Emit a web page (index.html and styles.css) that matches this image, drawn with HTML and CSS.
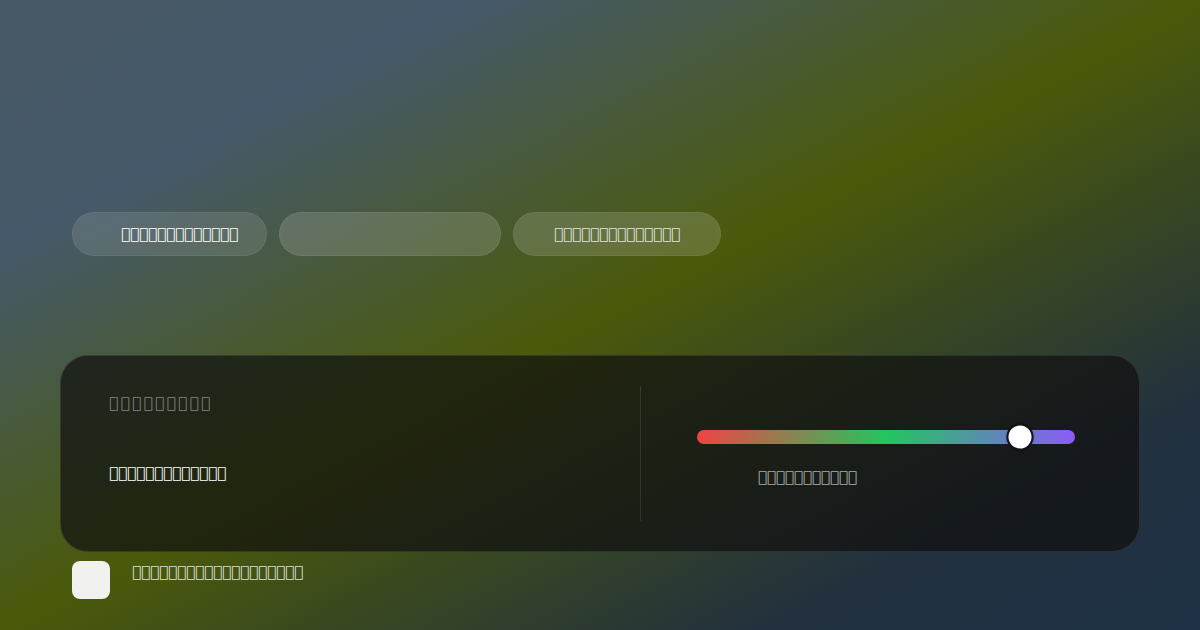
FILE: index.html
```html
<!DOCTYPE html>
<html>

  <head>
    <meta charset="utf-8">
    <link rel="stylesheet" href="styles.css">
  </head>

  <body>
    <div class="page">
      <div class="tabs">
        <button class="pill pill-active">&#xE101;&#xE102;&#xE103;&#xE104;&#xE105;&#xE106;&#xE107;&#xE108;&#xE109;&#xE10A;&#xE10B;&#xE10C;&#xE10D;</button>
        <button class="pill pill-empty"></button>
        <button class="pill pill-soft">&#xE111;&#xE112;&#xE113;&#xE114;&#xE115;&#xE116;&#xE117;&#xE118;&#xE119;&#xE11A;&#xE11B;&#xE11C;&#xE11D;&#xE11E;</button>
      </div>

      <div class="card">
        <div class="card-info">
          <div class="card-label">&#xE121;&#xE122;&#xE123;&#xE124;&#xE125;&#xE126;&#xE127;&#xE128;&#xE129;</div>
          <div class="card-value">&#xE131;&#xE132;&#xE133;&#xE134;&#xE135;&#xE136;&#xE137;&#xE138;&#xE139;&#xE13A;&#xE13B;&#xE13C;&#xE13D;</div>
        </div>

        <div class="card-divider"></div>

        <div class="card-control">
          <div class="hue-track">
            <div class="hue-thumb" style="left: 85.5%"></div>
          </div>
          <div class="hue-caption">&#xE141;&#xE142;&#xE143;&#xE144;&#xE145;&#xE146;&#xE147;&#xE148;&#xE149;&#xE14A;&#xE14B;</div>
        </div>
      </div>

      <label class="remember">
        <span class="checkbox"></span>
        <span class="remember-text">&#xE151;&#xE152;&#xE153;&#xE154;&#xE155;&#xE156;&#xE157;&#xE158;&#xE159;&#xE15A;&#xE15B;&#xE15C;&#xE15D;&#xE15E;&#xE15F;&#xE160;&#xE161;&#xE162;&#xE163;</span>
      </label>
    </div>
  </body>

</html>
```

FILE: styles.css
```css
html,
body {
  margin: 0;
  height: 100%;
}

body {
  font-family: "DejaVu Sans", sans-serif;
  font-size: 15px;
  line-height: 20px;
  color: #fff;
  background: linear-gradient(to bottom right, #485a66 0%, #46596a 20%, #4a5a0a 50%, #22303f 82%, #1e3146 100%);
  overflow: hidden;
}

.page {
  padding: 212px 60px 0;
}

/* tab pills */
.tabs {
  display: flex;
  gap: 12px;
  margin-left: 12px;
}

.pill {
  height: 44px;
  border: 1px solid rgba(255, 255, 255, 0.06);
  border-radius: 22px;
  font: inherit;
  color: #fff;
  background: rgba(255, 255, 255, 0.11);
  padding: 0 28px 0 48px;
}

.pill-empty {
  width: 222px;
  background: rgba(255, 255, 255, 0.15);
}

.pill-soft {
  padding: 0 40px;
  color: rgba(255, 255, 255, 0.85);
  background: rgba(255, 255, 255, 0.15);
}

/* main card */
.card {
  margin-top: 99px;
  display: grid;
  grid-template-columns: 6fr 1px 5fr;
  gap: 48px;
  padding: 30px 48px;
  height: 135px;
  border: 1px solid rgba(255, 255, 255, 0.1);
  border-radius: 28px;
  background: rgba(15, 15, 15, 0.7);
}

.card-info {
  padding-top: 7px;
}

.card-label {
  letter-spacing: 2.5px;
  color: rgba(255, 255, 255, 0.45);
}

.card-value {
  margin-top: 50px;
  font-weight: bold;
}

.card-divider {
  background: rgba(255, 255, 255, 0.1);
}

.card-control {
  padding: 38px 16px 0 8px;
}

.hue-track {
  position: relative;
  height: 14px;
  margin: 6px 0;
  border-radius: 7px;
  background: linear-gradient(90deg, #ef4444, #22c55e, #8b5cf6);
}

.hue-thumb {
  position: absolute;
  top: 50%;
  width: 23px;
  height: 23px;
  border: 2px solid #111318;
  border-radius: 50%;
  background: #fff;
  box-shadow: 0 0 2px rgba(0, 0, 0, 0.5);
  transform: translate(-50%, -50%);
}

.hue-caption {
  margin-top: 23px;
  padding-left: 61px;
  color: rgba(255, 255, 255, 0.65);
}

/* remember checkbox */
.remember {
  display: flex;
  align-items: flex-start;
  gap: 22px;
  margin: 9px 0 0 12px;
}

.checkbox {
  width: 38px;
  height: 38px;
  border-radius: 8px;
  background: #f1f2ef;
}

.remember-text {
  margin-top: 1px;
  color: rgba(255, 255, 255, 0.85);
}
```
